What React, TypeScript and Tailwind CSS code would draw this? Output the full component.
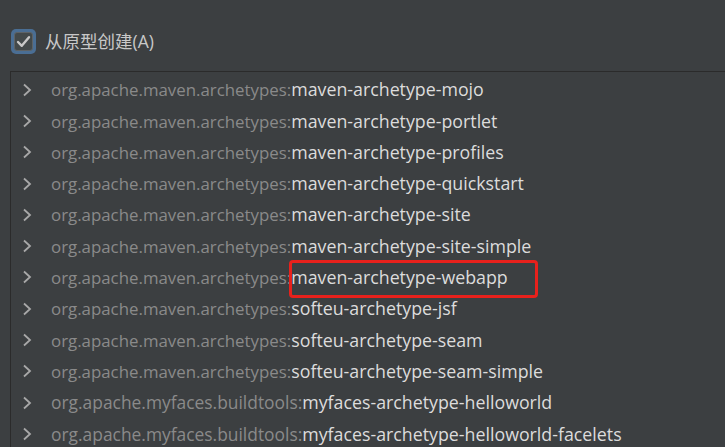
import React from "react";

const rows: [string, string][] = [
  ["org.apache.maven.archetypes:", "maven-archetype-mojo"],
  ["org.apache.maven.archetypes:", "maven-archetype-portlet"],
  ["org.apache.maven.archetypes:", "maven-archetype-profiles"],
  ["org.apache.maven.archetypes:", "maven-archetype-quickstart"],
  ["org.apache.maven.archetypes:", "maven-archetype-site"],
  ["org.apache.maven.archetypes:", "maven-archetype-site-simple"],
  ["org.apache.maven.archetypes:", "maven-archetype-webapp"],
  ["org.apache.maven.archetypes:", "softeu-archetype-jsf"],
  ["org.apache.maven.archetypes:", "softeu-archetype-seam"],
  ["org.apache.maven.archetypes:", "softeu-archetype-seam-simple"],
  ["org.apache.myfaces.buildtools:", "myfaces-archetype-helloworld"],
  ["org.apache.myfaces.buildtools:", "myfaces-archetype-helloworld-facelets"],
];

function Chevron() {
  return (
    <svg width="10" height="14" viewBox="0 0 10 14" className="shrink-0">
      <path d="M2 1.5 L8 7 L2 12.5" fill="none" stroke="#a8a8a8" strokeWidth="1.8" />
    </svg>
  );
}

export default function App() {
  return (
    <div
      className="h-[447px] w-[725px] overflow-hidden bg-[#3c3f41]"
      style={{ fontFamily: '"Open Sans", "Noto Sans CJK SC", sans-serif' }}
    >
      {/* checkbox header */}
      <div className="flex h-[71px] items-start pl-[11px] pt-[29px]">
        <div className="flex h-[25px] w-[25px] items-center justify-center rounded-[5px] bg-[#4a6e94]">
          <div className="flex h-[19px] w-[19px] items-center justify-center rounded-[3px] border border-[#5e6366] bg-[#43494a]">
            <svg width="15" height="13" viewBox="0 0 15 13">
              <path d="M2 7 L5.8 10.8 L13 2.2" fill="none" stroke="#c8c8c8" strokeWidth="2.4" strokeLinecap="round" strokeLinejoin="round" />
            </svg>
          </div>
        </div>
        <span className="ml-[9px] text-[17.5px] leading-[25px] text-[#c8c8c8]">从原型创建(A)</span>
      </div>

      {/* archetype list */}
      <div className="ml-[10px] border-l border-t border-[#2b2b2b] bg-[#3c3f41] pt-[2px]">
        {rows.map(([group, artifact], i) => (
          <div key={i} className="flex h-[31.3px] items-center pl-[11px]">
            <Chevron />
            <div className="ml-[19px] whitespace-nowrap">
              <span
                className={
                  group.includes("myfaces")
                    ? "text-[17.4px] text-[#8a8a8a]"
                    : "text-[16.85px] text-[#8a8a8a]"
                }
              >
                {group}
              </span>
              <span
                className={
                  artifact === "maven-archetype-webapp"
                    ? "relative text-[17.8px] text-[#dcdcdc] before:absolute before:-left-[2px] before:-right-[30px] before:-top-[5px] before:-bottom-[9px] before:rounded-[4px] before:border-[3px] before:border-[#e8211c] before:content-['']"
                    : "text-[17.8px] text-[#dcdcdc]"
                }
              >
                {artifact}
              </span>
            </div>
          </div>
        ))}
      </div>
    </div>
  );
}
